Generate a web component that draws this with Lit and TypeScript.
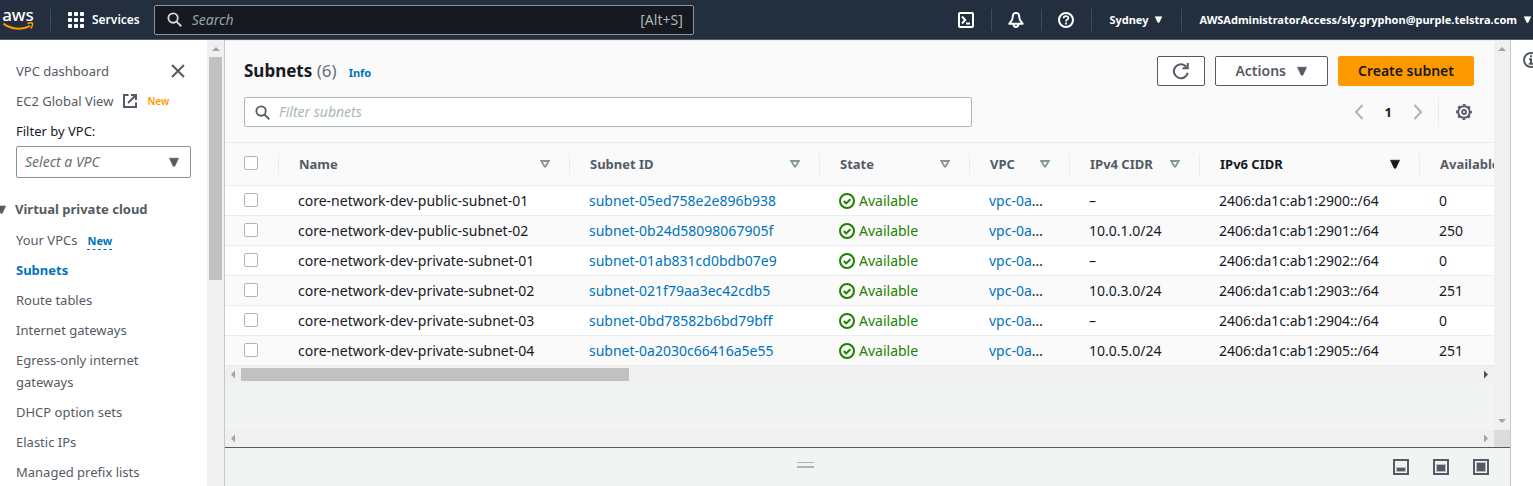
import { LitElement, html, css, svg } from "lit";
import { customElement, property } from "lit/decorators.js";
import { classMap } from "lit/directives/class-map.js";

interface Subnet {
  name: string;
  id: string;
  cidr4: string;
  cidr6: string;
  free: string;
}

const SUBNETS: Subnet[] = [
  { name: "core-network-dev-public-subnet-01", id: "subnet-05ed758e2e896b938", cidr4: "–", cidr6: "2406:da1c:ab1:2900::/64", free: "0" },
  { name: "core-network-dev-public-subnet-02", id: "subnet-0b24d58098067905f", cidr4: "10.0.1.0/24", cidr6: "2406:da1c:ab1:2901::/64", free: "250" },
  { name: "core-network-dev-private-subnet-01", id: "subnet-01ab831cd0bdb07e9", cidr4: "–", cidr6: "2406:da1c:ab1:2902::/64", free: "0" },
  { name: "core-network-dev-private-subnet-02", id: "subnet-021f79aa3ec42cdb5", cidr4: "10.0.3.0/24", cidr6: "2406:da1c:ab1:2903::/64", free: "251" },
  { name: "core-network-dev-private-subnet-03", id: "subnet-0bd78582b6bd79bff", cidr4: "–", cidr6: "2406:da1c:ab1:2904::/64", free: "0" },
  { name: "core-network-dev-private-subnet-04", id: "subnet-0a2030c66416a5e55", cidr4: "10.0.5.0/24", cidr6: "2406:da1c:ab1:2905::/64", free: "251" },
];

const COLUMNS = [
  { label: "Name", width: 291 },
  { label: "Subnet ID", width: 250 },
  { label: "State", width: 150 },
  { label: "VPC", width: 100 },
  { label: "IPv4 CIDR", width: 130 },
  { label: "IPv6 CIDR", width: 220, sorted: true },
  { label: "Available IPv4 addresses", width: 250 },
];

const icon = (size: number, body: unknown) => html`<svg
  width=${size} height=${size} viewBox="0 0 16 16" fill="none"
  stroke="currentColor" stroke-width="2" aria-hidden="true">${body}</svg>`;

const caret = (size: number) =>
  icon(size, svg`<path d="M2 3h12L9 13.500H7z" fill="currentColor" stroke-width="1"/>`);

const search = svg`<circle cx="6.500" cy="6.500" r="5"/><path d="M10.200 10.200l5 5"/>`;
const close = svg`<path d="M2 2l12 12M14 2L2 14"/>`;
const external = svg`<path d="M6.500 2H2v12h12V9.500M9 2h5v5M14 2L6 10"/>`;
const refresh = svg`<path d="M14 9.500A6.200 6.200 0 1 1 12.600 4.200M14 .8v4.700H9.300" stroke-width="1.800"/>`;
const gear = svg`<circle cx="8" cy="8" r="5.800" stroke-width="2"/><circle cx="8" cy="8" r="7.200" stroke-width="1.500" stroke-dasharray="3 2.650" stroke-dashoffset="1.500"/><circle cx="8" cy="8" r="2" stroke-width="1.800"/>`;
const check = svg`<circle cx="8" cy="8" r="7"/><path d="M4.800 8l2.400 2.400 4.200-4.200"/>`;
const shell = svg`<rect x="1" y="1" width="14" height="14" rx="1"/><path d="M4 4.500L7.200 8 4 11.500M8 11.500h4"/>`;
const bell = svg`<path d="M8 1C5.500 1 4.700 3 4.700 5.200 4.700 8.300 3 9.200 1.300 11.800h13.400C13 9.200 11.300 8.300 11.300 5.200 11.300 3 10.500 1 8 1zM5.600 12.500c0 3.300 4.800 3.300 4.800 0" stroke-linejoin="round"/>`;
const help = svg`<circle cx="8" cy="8" r="7"/><path d="M5.600 6.300c0-3 4.800-3 4.800 0C10.400 7.700 8 7.500 8 9.500M8 10.600v2" stroke-width="1.800"/>`;
const info = svg`<circle cx="8" cy="8" r="7"/><path d="M8 3.300v2M6 7.200h2v4.300M5.800 11.700h4.600"/>`;
const left = svg`<path d="M11.500 1L5 8l6.500 7"/>`;
const right = svg`<path d="M4.500 1L11 8l-6.500 7"/>`;
const waffle = svg`${[0, 6, 12].map((y) => [0, 6, 12].map((x) =>
  svg`<rect x=${x} y=${y} width="4" height="4" rx="1" fill="currentColor" stroke="none"/>`))}`;

const base = css`
  * { box-sizing: border-box; }
  svg { display: block; flex: none; }
  a { color: inherit; text-decoration: none; }
  button, input, select { font: inherit; color: inherit; margin: 0; }
  button { background: none; border: 0; padding: 0; cursor: pointer; }
`;

@customElement("scroll-bar")
export class ScrollBar extends LitElement {
  @property({ type: Boolean, reflect: true }) vertical = false;
  @property({ type: Boolean, reflect: true }) more = false;
  @property({ type: Boolean, reflect: true }) endless = false;
  @property({ type: Number }) thumb = 0;

  static styles = css`
    :host { display: flex; align-items: center; height: 17px; background: #f0f0f0; color: #a3a3a3; }
    :host([vertical]) { flex-direction: column; height: auto; width: 17px; }
    svg { display: block; flex: none; }
    .track { flex: 1; align-self: stretch; padding: 2px 0; }
    :host([vertical]) .track { padding: 0 2px; }
    .thumb { height: 100%; background: #c1c1c1; }
    :host([more]) .next { color: #505050; }
    :host([endless]) .next { display: none; }
  `;

  render() {
    const size = this.thumb ? `${this.vertical ? "height" : "width"}:${this.thumb}%` : "display:none";
    return html`
      <svg width="16" height="17" fill="currentColor">
        <path d=${this.vertical ? "M4 11h8L8 7z" : "M10 4.500v8L6 8.500z"} /></svg>
      <div class="track"><div class="thumb" style=${size}></div></div>
      <svg class="next" width="16" height="17" fill="currentColor">
        <path d=${this.vertical ? "M4 6h8L8 10z" : "M6 4.500v8l4-4z"} /></svg>`;
  }
}

@customElement("console-header")
export class ConsoleHeader extends LitElement {
  static styles = [base, css`
    :host { display: block; }
    .bar {
      display: flex; align-items: center; height: 40px; overflow: hidden;
      background: #232f3e; border-bottom: 1px solid #545b64;
      color: #fff; font-size: 12px; font-weight: 600; white-space: nowrap;
    }
    .logo { display: flex; flex-direction: column; align-items: center; width: 36px; margin-right: 14px; line-height: 14px; font-size: 17px; font-weight: 500; }
    .rule { width: 1px; height: 22px; background: #3f4b59; flex: none; }
    .services { display: flex; align-items: center; gap: 8px; margin: 0 14px 0 17px; }
    .search {
      display: flex; align-items: center; gap: 10px; flex: 0 1 540px; height: 30px; padding: 0 10px 0 12px;
      background: #16191f; border: 1px solid #879596; border-radius: 2px;
      font-size: 14px; font-weight: 400; color: #aab7b8;
    }
    .search svg { color: #d5dbdb; }
    .search input { flex: 1; min-width: 0; background: none; border: 0; outline: 0; padding: 0; }
    .search input::placeholder { color: #95a5a6; font-style: italic; opacity: 1; }
    .tools { display: flex; align-items: center; margin-left: auto; flex: none; }
    .tools .icon { padding: 0 17px 0 16px; }
    .menu { display: flex; align-items: center; gap: 6px; padding: 0 18px 0 17px; font-size: 11px; font-weight: 700; }
    .account { padding-right: 1px; }
  `];

  render() {
    return html`<header class="bar">
      <a class="logo" href="#" aria-label="AWS home">aws
        <svg width="31" height="9" viewBox="0 0 31 9" fill="none" stroke="#ff9900" stroke-width="2">
          <path d="M0.500 1.500C8 7.500 19 8.300 27 3.800" />
          <path d="M24.500 1.500c2-.8 4.500-.8 5 0s-.5 3.500-1.800 5" stroke-width="1.500" />
        </svg></a>
      <span class="rule"></span>
      <button class="services">${icon(16, waffle)}Services</button>
      <label class="search">${icon(15, search)}
        <input type="search" placeholder="Search" aria-label="Search" /><span>[Alt+S]</span></label>
      <div class="tools">
        <button class="icon" aria-label="CloudShell">${icon(16, shell)}</button><span class="rule"></span>
        <button class="icon" aria-label="Notifications">${icon(16, bell)}</button><span class="rule"></span>
        <button class="icon" aria-label="Help">${icon(16, help)}</button><span class="rule"></span>
        <button class="menu">Sydney ${caret(9)}</button><span class="rule"></span>
        <button class="menu account">AWSAdministratorAccess/sly.gryphon@purple.telstra.com ${caret(9)}</button>
      </div>
    </header>`;
  }
}

@customElement("side-nav")
export class SideNav extends LitElement {
  static styles = [base, css`
    :host { display: flex; min-height: 0; background: #fff; border-right: 1px solid #c3c8c9; color: #545b64; }
    nav { flex: 1; min-width: 0; overflow: hidden; padding: 20px 16px 0; line-height: 22px; }
    .row { display: flex; align-items: center; margin-bottom: 8px; }
    .close { margin-left: auto; margin-right: 5px; }
    .external { margin: 0 9px; }
    .new { font-size: 10px; font-weight: 600; color: #f90; }
    .filter { display: block; color: #16191f; margin-bottom: 4px; }
    .select { display: grid; align-items: center; margin-bottom: 20px; }
    .select > * { grid-area: 1 / 1; }
    .select svg { justify-self: end; margin-right: 11px; pointer-events: none; }
    select { appearance: none; width: 100%; height: 32px; padding: 0 8px; background: #fff; border: 1px solid #879596; border-radius: 2px; font-size: 14px; font-style: italic; color: #687078; }
    .group { display: flex; align-items: center; gap: 8px; margin: 0 0 9px -20px; font-size: inherit; font-weight: 700; }
    .list { margin: 0; padding: 0; list-style: none; }
    .list li { margin-bottom: 8px; }
    .current { color: #0073bb; font-weight: 700; }
    .tag { margin-left: 10px; font-size: 11px; line-height: 16px; display: inline-block; font-weight: 700; color: #0073bb; border-bottom: 1px dashed #0073bb; }
  `];

  private links = ["Route tables", "Internet gateways", "Egress-only internet gateways", "DHCP option sets", "Elastic IPs", "Managed prefix lists"];

  render() {
    return html`<nav aria-label="VPC">
        <div class="row"><a href="#">VPC dashboard</a>
          <button class="close" aria-label="Close">${icon(16, close)}</button></div>
        <div class="row"><a href="#">EC2 Global View</a>
          <span class="external">${icon(16, external)}</span><span class="new">New</span></div>
        <label class="filter" for="vpc">Filter by VPC:</label>
        <div class="select"><select id="vpc"><option>Select a VPC</option></select>${caret(12)}</div>
        <h2 class="group">${caret(11)}<span>Virtual private cloud</span></h2>
        <ul class="list">
          <li><a href="#">Your VPCs</a><span class="tag">New</span></li>
          <li><a href="#" class="current" aria-current="page">Subnets</a></li>
          ${this.links.map((l) => html`<li><a href="#">${l}</a></li>`)}
        </ul>
      </nav>
      <scroll-bar vertical endless thumb="52"></scroll-bar>`;
  }
}

@customElement("subnet-table")
export class SubnetTable extends LitElement {
  static styles = [base, css`
    :host { display: block; overflow: hidden; }
    table { table-layout: fixed; border-collapse: separate; border-spacing: 0; background: #fff; width: 1445px; }
    th, td { text-align: left; padding: 0 20px 0 19px; white-space: nowrap; border-bottom: 1px solid #eaeded; overflow: hidden; }
    th { height: 43px; padding: 0; background: #fafafa; color: #545b64; font-weight: 700; }
    td { height: 30px; font-size: 14px; line-height: 22px; color: #16191f; }
    tr:nth-child(even) td { background: #fafafa; }
    .head { display: flex; align-items: center; justify-content: space-between; height: 21px; padding: 0 18px 0 20px; border-right: 1px solid #eaeded; }
    .head svg { color: #879596; }
    .sorted, .head.sorted svg { color: #16191f; }
    .all { padding-left: 19px; }
    .pick { width: 54px; }
    input { appearance: none; display: block; width: 14px; height: 14px; margin-bottom: 2px; background: #fff; border: 1px solid #aab7b8; border-radius: 2px; }
    a { color: #0073bb; }
    .state { display: flex; align-items: center; gap: 4px; color: #1d8102; }
  `];

  render() {
    return html`<table>
      <colgroup><col class="pick" />${COLUMNS.map((c) => html`<col style="width:${c.width}px" />`)}</colgroup>
      <thead><tr>
        <th><div class="head all"><input type="checkbox" aria-label="Select all" /></div></th>
        ${COLUMNS.map((c) => html`<th><div class=${classMap({ head: true, sorted: !!c.sorted })}>${c.label}
          ${c.sorted ? caret(12) : icon(12, svg`<path d="M3 4h10L8.500 11.500h-1z" stroke-width="2.500"/>`)}</div></th>`)}
      </tr></thead>
      <tbody>${SUBNETS.map((s) => html`<tr>
        <td><input type="checkbox" aria-label=${s.name} /></td>
        <td>${s.name}</td>
        <td><a href="#">${s.id}</a></td>
        <td><span class="state">${icon(16, check)}Available</span></td>
        <td><a href="#">vpc-0a</a>…</td>
        <td>${s.cidr4}</td><td>${s.cidr6}</td><td>${s.free}</td>
      </tr>`)}</tbody>
    </table>`;
  }
}

@customElement("app-root")
export class AppRoot extends LitElement {
  static styles = [base, css`
    :host {
      display: grid; grid-template-rows: auto minmax(0, 1fr); height: 100vh; overflow: hidden;
      font-family: "Noto Sans", sans-serif; font-size: 13px; line-height: 22px; color: #16191f;
    }
    .body { display: grid; grid-template-columns: 225px minmax(0, 1fr) 22px; min-height: 0; }
    .center { display: flex; flex-direction: column; min-height: 0; background: #f2f3f3; border-right: 1px solid #c3c8c9; }
    .view { flex: 1; display: grid; grid-template: minmax(0, 1fr) auto / minmax(0, 1fr) 16px; min-height: 0; }
    .view > scroll-bar[vertical] { width: 16px; }
    .page { min-width: 0; overflow: hidden; }
    .top { background: #fafafa; border-top: 1px solid #eaeded; border-bottom: 1px solid #eaeded; padding: 15px 20px 15px 19px; }
    .line { display: flex; align-items: center; }
    .title { margin: 0; font-size: 17px; font-weight: 700; }
    .count { font-weight: 400; color: #687078; }
    .info { margin-left: 12px; padding-top: 3px; font-size: 11px; font-weight: 700; color: #0073bb; }
    .actions { display: flex; gap: 10px; margin-left: auto; }
    .button { display: flex; align-items: center; justify-content: center; gap: 10px; height: 30px; padding: 0 19px; border: 1px solid #545b64; border-radius: 2px; background: #fff; color: #545b64; font-weight: 600; font-size: 14px; }
    .reload { padding: 0 14px; }
    .primary { background: #f90; border-color: #f90; color: #16191f; }
    .tools { margin-top: 11px; justify-content: space-between; }
    .filter { display: flex; align-items: center; gap: 9px; flex: 0 1 728px; height: 30px; padding: 0 10px; background: #fff; border: 1px solid #aab7b8; border-radius: 2px; color: #545b64; font-size: 14px; }
    .filter input { flex: 1; min-width: 0; border: 0; outline: 0; padding: 0; background: none; }
    .filter input::placeholder { color: #aab7b8; font-style: italic; opacity: 1; }
    .pager { display: flex; align-items: center; gap: 18px; height: 30px; color: #aab7b8; }
    .number { font-weight: 700; color: #16191f; }
    .prefs { height: 30px; padding: 0 2px 0 17px; margin-left: -6px; border-left: 1px solid #eaeded; color: #545b64; }
    .corner { background: #dcdcdc; }
    .split { display: grid; grid-template-columns: 1fr auto; align-items: center; height: 39px; border-top: 1px solid #545b64; color: #545b64; }
    .grip { justify-self: center; width: 17px; height: 6px; margin-bottom: 4px; border: solid #aab7b8; border-width: 1px 0 2px; }
    .sizes { display: flex; gap: 24px; padding: 0 21px 0 8px; }
    .help { background: #fff; padding: 12px 0 0 12px; overflow: hidden; color: #545b64; }
  `];

  render() {
    const pane = (y: number) => icon(16, svg`<path d="M1 1h14v14H1z"/><path d="M3.500 ${y}h9v${12.5 - y}h-9z" fill="currentColor" stroke="#b5babd" stroke-width="1"/>`);
    return html`
      <console-header></console-header>
      <div class="body">
        <side-nav></side-nav>
        <main class="center">
          <div class="view">
            <div class="page">
              <div class="top">
                <div class="line">
                  <h1 class="title">Subnets <span class="count">(6)</span></h1><a class="info" href="#">Info</a>
                  <div class="actions">
                    <button class="button reload" aria-label="Refresh">${icon(18, refresh)}</button>
                    <button class="button">Actions ${caret(12)}</button>
                    <button class="button primary">Create subnet</button>
                  </div>
                </div>
                <div class="line tools">
                  <label class="filter">${icon(15, search)}<input type="text" placeholder="Filter subnets" aria-label="Filter subnets" /></label>
                  <div class="pager">
                    <button aria-label="Previous page">${icon(16, left)}</button>
                    <span class="number">1</span>
                    <button aria-label="Next page">${icon(16, right)}</button>
                    <button class="prefs" aria-label="Preferences">${icon(16, gear)}</button>
                  </div>
                </div>
              </div>
              <subnet-table></subnet-table>
              <scroll-bar more thumb="31.4"></scroll-bar>
            </div>
            <scroll-bar vertical></scroll-bar>
            <scroll-bar></scroll-bar>
            <div class="corner"></div>
          </div>
          <div class="split">
            <span class="grip"></span>
            <div class="sizes">
              <button aria-label="Small panel">${pane(8.5)}</button>
              <button aria-label="Medium panel">${pane(5.5)}</button>
              <button aria-label="Full panel">${pane(3.5)}</button>
            </div>
          </div>
        </main>
        <aside class="help"><button aria-label="Help panel">${icon(16, info)}</button></aside>
      </div>`;
  }
}
